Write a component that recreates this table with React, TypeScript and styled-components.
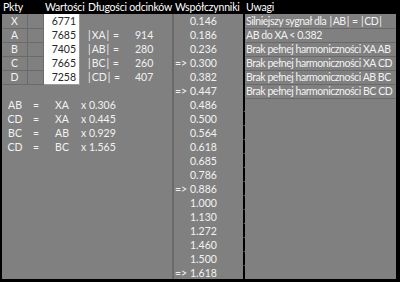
import React from "react";
import styled, { createGlobalStyle } from "styled-components";

const GlobalStyle = createGlobalStyle`
  html, body { margin: 0; padding: 0; background: #000; }
  body { font-family: Lato, "Liberation Sans", sans-serif; }
`;

const COLS = "26px 16px 36px 46px 46px 71px 153px";

const Sheet = styled.div`
  width: 400px;
  height: 282px;
  box-sizing: border-box;
  background: #000;
  padding: 0 4px 3px 2px;
  display: flex;
  flex-direction: column;
  overflow: hidden;
`;

const HeaderRow = styled.div`
  display: grid;
  grid-template-columns: ${COLS};
  height: 14px;
  flex: none;
  color: #fff;
  font-size: 10.5px;
  letter-spacing: -0.2px;
  line-height: 14px;
  white-space: nowrap;
`;

const HeadCell = styled.div<{ $pad?: number }>`
  padding-left: ${(p) => p.$pad ?? 1}px;
  overflow: visible;
`;

const Body = styled.div`
  flex: 1;
  background: #808080;
  display: flex;
  flex-direction: column;
  overflow: hidden;
`;

const Row = styled.div`
  display: grid;
  grid-template-columns: ${COLS};
  height: 14px;
  flex: none;
  color: #f2f2f2;
  font-size: 10.5px;
  line-height: 14px;
  white-space: nowrap;
`;

const Cell = styled.div<{ $align?: "left" | "center" | "right"; $pad?: number }>`
  text-align: ${(p) => p.$align ?? "left"};
  padding-left: ${(p) => p.$pad ?? 0}px;
  box-sizing: border-box;
`;

const GridCell = styled(Cell)`
  border-right: 1px solid #6a6a6a;
  border-bottom: 1px solid #6a6a6a;
`;

const ValueCell = styled.div`
  background: #fff;
  color: #262626;
  text-align: right;
  padding-right: 3px;
  border-bottom: 1px solid #9a9a9a;
  border-right: 1px solid #9a9a9a;
  box-sizing: border-box;
`;

const CoefCell = styled.div`
  border-left: 2px solid #6a6a6a;
  display: flex;
  padding-left: 1px;
`;

const Arrow = styled.span`
  width: 15px;
`;

const NoteCell = styled.div<{ $grid?: boolean }>`
  border-left: 2px solid #000;
  padding-left: 1px;
  box-sizing: border-box;
  font-size: 10.5px;
  letter-spacing: -0.45px;
  border-bottom: 1px solid ${(p) => (p.$grid ? "#6a6a6a" : "transparent")};
`;

const Pipe = styled.span`
  padding: 0 1px;
`;

/* Draws "|AB|"-style absolute values with a little air around the bars */
function Abs({ text }: { text: string }) {
  const parts = text.split("|");
  return (
    <>
      {parts.map((p, i) => (
        <React.Fragment key={i}>
          {p}
          {i < parts.length - 1 && <Pipe>|</Pipe>}
        </React.Fragment>
      ))}
    </>
  );
}

type Line = {
  point?: string;
  value?: string;
  len?: [string, string];
  ratio?: [string, string, string];
  arrow?: boolean;
  coef?: string;
  note?: string;
};

const lines: Line[] = [
  { point: "X", value: "6771", coef: "0.146", note: "Silniejszy sygnał dla |AB| = |CD|" },
  { point: "A", value: "7685", len: ["|XA| =", "914"], coef: "0.186", note: "AB do XA < 0.382" },
  { point: "B", value: "7405", len: ["|AB| =", "280"], coef: "0.236", note: "Brak pełnej harmoniczności XA AB" },
  { point: "C", value: "7665", len: ["|BC| =", "260"], arrow: true, coef: "0.300", note: "Brak pełnej harmoniczności XA CD" },
  { point: "D", value: "7258", len: ["|CD| =", "407"], coef: "0.382", note: "Brak pełnej harmoniczności AB BC" },
  { arrow: true, coef: "0.447", note: "Brak pełnej harmoniczności BC CD" },
  { ratio: ["AB", "XA", "x 0.306"], coef: "0.486" },
  { ratio: ["CD", "XA", "x 0.445"], coef: "0.500" },
  { ratio: ["BC", "AB", "x 0.929"], coef: "0.564" },
  { ratio: ["CD", "BC", "x 1.565"], coef: "0.618" },
  { coef: "0.685" },
  { coef: "0.786" },
  { arrow: true, coef: "0.886" },
  { coef: "1.000" },
  { coef: "1.130" },
  { coef: "1.272" },
  { coef: "1.460" },
  { coef: "1.500" },
  { arrow: true, coef: "1.618" },
  {},
];

function SheetRow({ line, index }: { line: Line; index: number }) {
  const hasNote = index < 6;
  return (
    <Row>
      {line.point ? (
        <>
          <GridCell $align="center">{line.point}</GridCell>
          <GridCell />
          <ValueCell>{line.value}</ValueCell>
        </>
      ) : line.ratio ? (
        <>
          <Cell $align="center">{line.ratio[0]}</Cell>
          <Cell $align="center">=</Cell>
          <Cell $align="center">{line.ratio[1]}</Cell>
        </>
      ) : (
        <>
          <Cell />
          <Cell />
          <Cell />
        </>
      )}
      {line.ratio ? (
        <>
          <Cell $pad={1}>{line.ratio[2]}</Cell>
          <Cell />
        </>
      ) : (
        <>
          <Cell $pad={7}>{line.len && <Abs text={line.len[0]} />}</Cell>
          <Cell $pad={9}>{line.len?.[1]}</Cell>
        </>
      )}
      <CoefCell>
        <Arrow>{line.arrow ? "=>" : ""}</Arrow>
        <span>{line.coef}</span>
      </CoefCell>
      <NoteCell $grid={hasNote}>{line.note && <Abs text={line.note} />}</NoteCell>
    </Row>
  );
}

export default function App() {
  return (
    <>
      <GlobalStyle />
      <Sheet>
        <HeaderRow>
          <HeadCell>Pkty</HeadCell>
          <HeadCell />
          <HeadCell $pad={1}>Wartości</HeadCell>
          <HeadCell $pad={8}>Długości odcinków</HeadCell>
          <HeadCell />
          <HeadCell $pad={3}>Współczynniki</HeadCell>
          <HeadCell $pad={3}>Uwagi</HeadCell>
        </HeaderRow>
        <Body>
          {lines.map((line, i) => (
            <SheetRow key={i} line={line} index={i} />
          ))}
        </Body>
      </Sheet>
    </>
  );
}
